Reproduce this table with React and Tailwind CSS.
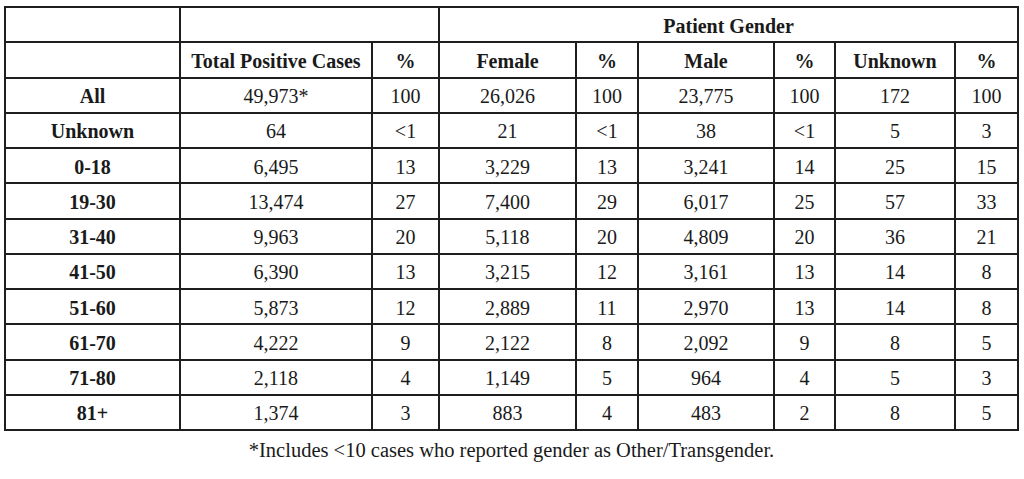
import React from 'react';

const rows = [
  ['All', '49,973*', '100', '26,026', '100', '23,775', '100', '172', '100'],
  ['Unknown', '64', '<1', '21', '<1', '38', '<1', '5', '3'],
  ['0-18', '6,495', '13', '3,229', '13', '3,241', '14', '25', '15'],
  ['19-30', '13,474', '27', '7,400', '29', '6,017', '25', '57', '33'],
  ['31-40', '9,963', '20', '5,118', '20', '4,809', '20', '36', '21'],
  ['41-50', '6,390', '13', '3,215', '12', '3,161', '13', '14', '8'],
  ['51-60', '5,873', '12', '2,889', '11', '2,970', '13', '14', '8'],
  ['61-70', '4,222', '9', '2,122', '8', '2,092', '9', '8', '5'],
  ['71-80', '2,118', '4', '1,149', '5', '964', '4', '5', '3'],
  ['81+', '1,374', '3', '883', '4', '483', '2', '8', '5'],
];

const widths = [175, 192, 67, 137, 62, 136, 61, 120, 63];
const heads = ['', 'Total Positive Cases', '%', 'Female', '%', 'Male', '%', 'Unknown', '%'];

const cell = 'border-2 border-[#1e1e1e] text-center align-middle p-0 pt-[2px] h-[35.25px]';

export default function App() {
  return (
    <div className="bg-white w-[1024px] h-[479px] pt-[6px] pl-[4px] text-[#1a1a1a] text-[20px] leading-none font-['Liberation_Serif',serif]">
      <table className="table-fixed border-collapse w-[1015px]">
        <colgroup>
          {widths.map((w, i) => (
            <col key={i} style={{ width: w }} />
          ))}
        </colgroup>
        <thead>
          <tr>
            <th className={cell}></th>
            <th className={cell} colSpan={2}></th>
            <th className={`${cell} font-bold`} colSpan={6}>Patient Gender</th>
          </tr>
          <tr>
            {heads.map((h, i) => (
              <th key={i} className={`${cell} font-bold`}>{h}</th>
            ))}
          </tr>
        </thead>
        <tbody>
          {rows.map((r) => (
            <tr key={r[0]}>
              {r.map((v, i) => (
                <td key={i} className={`${cell} ${i === 0 ? 'font-bold' : 'font-normal'}`}>{v}</td>
              ))}
            </tr>
          ))}
        </tbody>
      </table>
      <p className="text-center w-[1015px] mt-[9px] text-[20.5px]">
        *Includes &lt;10 cases who reported gender as Other/Transgender.
      </p>
    </div>
  );
}
